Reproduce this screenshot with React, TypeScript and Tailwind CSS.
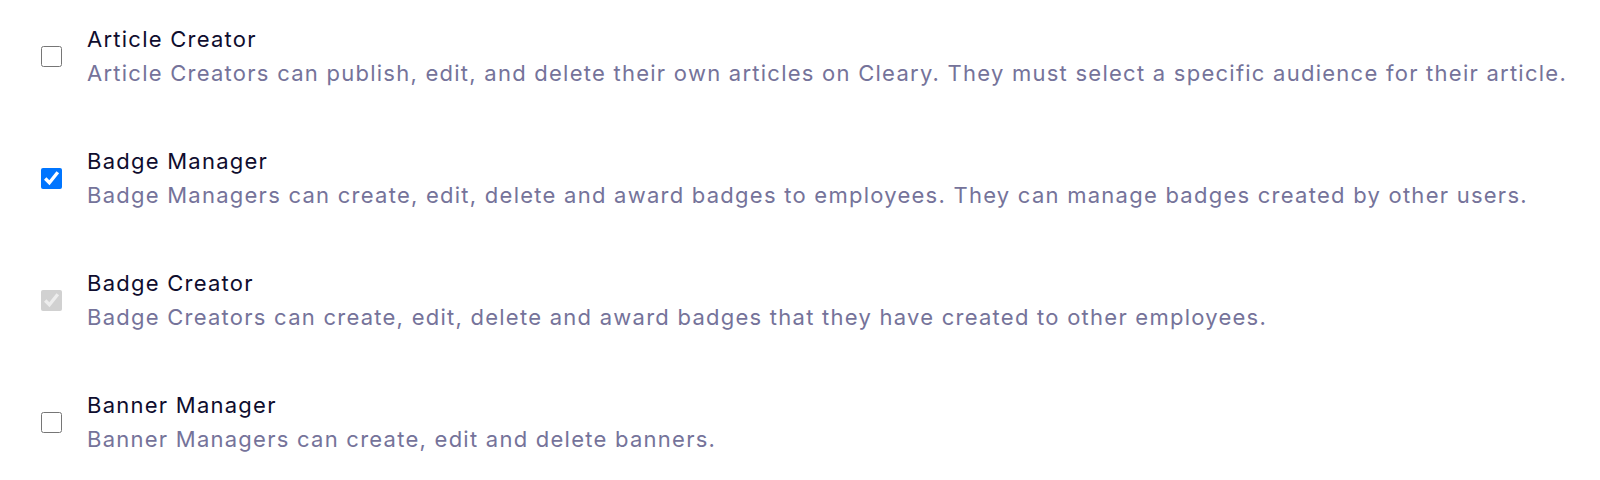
import React from "react";

const rows = [
  {
    title: "Article Creator",
    desc: "Article Creators can publish, edit, and delete their own articles on Cleary. They must select a specific audience for their article.",
    checked: false,
    disabled: false,
  },
  {
    title: "Badge Manager",
    desc: "Badge Managers can create, edit, delete and award badges to employees. They can manage badges created by other users.",
    checked: true,
    disabled: false,
  },
  {
    title: "Badge Creator",
    desc: "Badge Creators can create, edit, delete and award badges that they have created to other employees.",
    checked: true,
    disabled: true,
  },
  {
    title: "Banner Manager",
    desc: "Banner Managers can create, edit and delete banners.",
    checked: false,
    disabled: false,
  },
];

export default function App() {
  return (
    <div
      className="w-[1600px] h-[480px] bg-white overflow-hidden flex flex-col gap-[54px] pt-[22px]"
      style={{ fontFamily: "Inter, 'Noto Sans', sans-serif" }}
    >
      {rows.map((r) => (
        <label key={r.title} className="flex items-center pl-[41px]">
          <input
            type="checkbox"
            defaultChecked={r.checked}
            disabled={r.disabled}
            className="w-[21px] h-[21px] m-0 shrink-0"
          />
          <div className="ml-[25px] flex flex-col tracking-[1.25px]">
            <div className="text-[22px] leading-[34px] text-[#0f0d2e]">{r.title}</div>
            <div className="text-[22px] leading-[34px] text-[#75739a]">{r.desc}</div>
          </div>
        </label>
      ))}
    </div>
  );
}
